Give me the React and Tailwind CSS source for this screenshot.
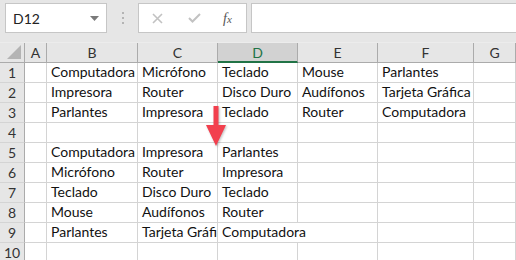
import React from "react";

const COLS = ["A", "B", "C", "D", "E", "F", "G"];
const WIDTHS = ["w-[22px]", "w-[91px]", "w-[80px]", "w-[80px]", "w-[80px]", "w-[96px]", "flex-1"];

const DATA = {
  1: { B: "Computadora", C: "Micrófono", D: "Teclado", E: "Mouse", F: "Parlantes" },
  2: { B: "Impresora", C: "Router", D: "Disco Duro", E: "Audífonos", F: "Tarjeta Gráfica" },
  3: { B: "Parlantes", C: "Impresora", D: "Teclado", E: "Router", F: "Computadora" },
  4: {},
  5: { B: "Computadora", C: "Impresora", D: "Parlantes" },
  6: { B: "Micrófono", C: "Router", D: "Impresora" },
  7: { B: "Teclado", C: "Disco Duro", D: "Teclado" },
  8: { B: "Mouse", C: "Audífonos", D: "Router" },
  9: { B: "Parlantes", C: "Tarjeta Gráfica", D: "Computadora" },
  10: {},
};

const font = { fontFamily: "Lato, 'Liberation Sans', sans-serif" };

function Cell({ row, col, i }) {
  const text = DATA[row][col];
  const overflow = row === 9 && col === "D";
  return (
    <div
      className={`${WIDTHS[i]} shrink-0 h-full border-b border-[#d4d4d4] ${
        overflow ? "relative z-10" : "border-r overflow-hidden"
      } flex items-end pl-[4px] pb-[1px] text-[14px] leading-[18px] text-[#111] whitespace-nowrap`}
    >
      {text}
    </div>
  );
}

export default function App() {
  const rows = [1, 2, 3, 4, 5, 6, 7, 8, 9, 10];
  return (
    <div className="w-[516px] h-[260px] overflow-hidden bg-white relative" style={font}>
      {/* toolbar */}
      <div className="h-[42px] bg-[#e6e6e6] flex items-start pt-[3px]">
        <div className="ml-[5px] w-[102px] h-[30px] bg-white border border-[#c6c6c6] flex items-center justify-between pl-[7px] pr-[7px]">
          <span className="text-[14px] text-[#222]">D12</span>
          <svg width="9" height="5" viewBox="0 0 9 5"><path d="M0 0 L9 0 L4.5 5 Z" fill="#7a7a7a" /></svg>
        </div>
        <div className="w-[31px] h-[30px] flex flex-col items-center justify-center gap-[3px]">
          <div className="w-[2px] h-[2px] bg-[#b4b4b4]" />
          <div className="w-[2px] h-[2px] bg-[#b4b4b4]" />
          <div className="w-[2px] h-[2px] bg-[#b4b4b4]" />
        </div>
        <div className="w-[109px] h-[30px] bg-white border border-[#c6c6c6] flex items-center">
          <svg className="ml-[13px]" width="11" height="11" viewBox="0 0 11 11">
            <path d="M1 1 L10 10 M10 1 L1 10" stroke="#c2c2c2" strokeWidth="1.6" />
          </svg>
          <svg className="ml-[25px]" width="13" height="10" viewBox="0 0 13 10">
            <path d="M1 5 L4.5 8.5 L12 1" stroke="#c2c2c2" strokeWidth="2" fill="none" />
          </svg>
          <span className="ml-[22px] text-[14px] italic text-[#555]" style={{ fontFamily: "'Liberation Serif', serif" }}>
            f<span className="text-[11px]">x</span>
          </span>
        </div>
        <div className="ml-[4px] flex-1 h-[30px] bg-white border border-[#c6c6c6] border-r-0" />
      </div>
      {/* column headers */}
      <div className="h-[21px] flex bg-[#e6e6e6] border-t border-[#ececec]">
        <div className="w-[25px] shrink-0 h-full border-r border-b border-[#ababab] relative">
          <svg className="absolute right-[3px] bottom-[3px]" width="14" height="14" viewBox="0 0 14 14">
            <path d="M14 0 L14 14 L0 14 Z" fill="#b4b4b4" />
          </svg>
        </div>
        {COLS.map((c, i) => (
          <div
            key={c}
            className={`${WIDTHS[i]} shrink-0 h-full flex items-center justify-center text-[14px] ${
              c === "D"
                ? "bg-[#d2d2d2] text-[#217346] border-b-2 border-b-[#217346] border-r border-r-[#ababab]"
                : "text-[#333] border-b border-r border-[#ababab]"
            }`}
          >
            {c}
          </div>
        ))}
      </div>
      {/* rows */}
      {rows.map((r) => (
        <div key={r} className="h-[20px] flex">
          <div className="w-[25px] shrink-0 h-full bg-[#e6e6e6] border-r border-r-[#ababab] border-b border-b-[#d4d4d4] flex items-center justify-center text-[14px] text-[#333]">
            {r}
          </div>
          {COLS.map((c, i) => (
            <Cell key={c} row={r} col={c} i={i} />
          ))}
        </div>
      ))}
      {/* red arrow overlay */}
      <svg
        className="absolute left-[204px] top-[104px] z-20"
        width="24"
        height="44"
        viewBox="0 0 24 44"
        style={{ filter: "drop-shadow(1px 1px 1px rgba(0,0,0,0.25))" }}
      >
        <path d="M9.5 2 L14.5 2 L14.5 21 L22 21 L12 42 L2 21 L9.5 21 Z" fill="#f2404e" strokeLinejoin="round" />
      </svg>
    </div>
  );
}
